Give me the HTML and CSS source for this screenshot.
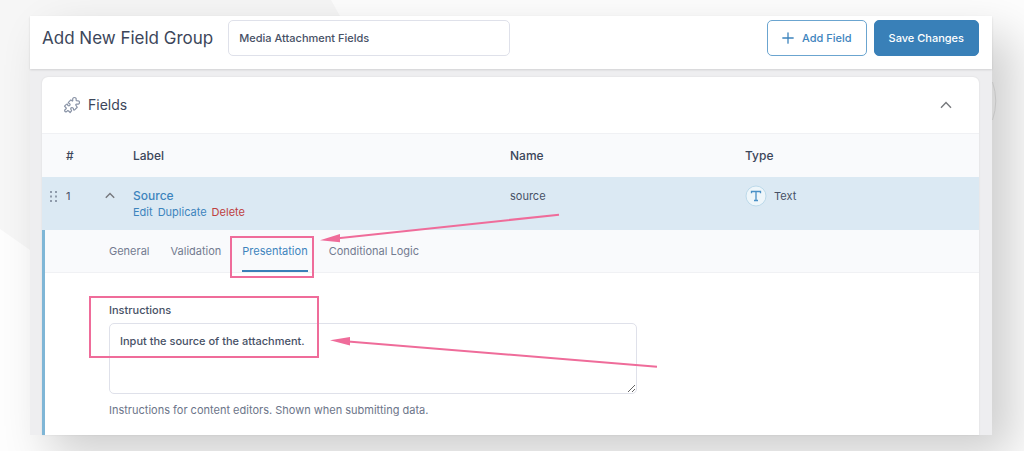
FILE: index.html
```html
<!DOCTYPE html>
<html lang="en">
<head>
<meta charset="utf-8">
<title>Add New Field Group</title>
<link rel="stylesheet" href="styles.css">
</head>
<body>
<svg class="backdrop" aria-hidden="true"><path d="M0 0H331L340 16V250H30L0 229Z" fill="#f6f6f6"/></svg>
<div class="window">
  <header class="topbar">
    <h1 class="title"><label for="group-name">Add New Field Group</label></h1>
    <input class="group-name" id="group-name" type="text" value="Media Attachment Fields">
    <div class="actions">
      <button class="btn btn-outline" type="button">
        <svg width="12" height="12" viewBox="0 0 12 12" fill="none" stroke="currentColor" stroke-width="1.3" stroke-linecap="round"><path d="M6 .8V11.2M.8 6H11.2"/></svg>
        Add Field
      </button>
      <button class="btn btn-primary" type="button">Save Changes</button>
    </div>
  </header>
  <main class="content">
    <section class="card">
      <div class="card-head">
        <svg class="puzzle" width="18" height="18" viewBox="0 0 24 24" fill="none" stroke="currentColor" stroke-width="1.6" stroke-linejoin="round"><path d="M13 5.500C12.500 3.500 13.500 2 15.200 2S18 3.500 17.500 5C17.300 6 18 6.700 19 6.500C20.500 6 22 7 22 8.700S20.500 11.300 18.500 10.800C17.300 10.600 16.700 11.500 17.300 12.500L19 15L15.500 18.500C14.700 19.200 14 18.600 14 17.800C14 16 12.800 15 11.500 15.500C10 16 10 17.500 11 18.500C11.600 19.200 11.500 19.800 11 20.300L9.500 22L7.500 20C6.800 19.300 6 19.500 5.500 20.200C4.500 21.500 3 21.300 2.400 20.200C1.800 19 2.500 18 3.700 17.500C4.600 17 4.600 16.300 4 15.700L2 13.500L4.500 11.200C5.200 10.600 6 10.800 6.200 11.700C6.500 13 8 13.500 9 12.500S9.300 10 8 9.700C7 9.500 6.900 8.700 7.500 8.200L10.500 5.200L12 6.500C12.700 7 13.200 6.500 13 5.500Z"/></svg>
        <h2 class="card-title">Fields</h2>
        <button class="icon-btn" type="button" aria-label="Collapse fields"><svg width="12" height="8" viewBox="0 0 12 8" fill="none" stroke="currentColor" stroke-width="1.4"><path d="M1 6.800 6 1.600 11 6.800"/></svg></button>
      </div>
      <table class="fields">
        <colgroup><col class="col-num"><col class="col-toggle"><col class="col-label"><col class="col-name"><col></colgroup>
        <thead><tr><th class="num">#</th><th></th><th>Label</th><th>Name</th><th>Type</th></tr></thead>
        <tbody>
          <tr class="row">
            <td><div class="handle"><svg width="7" height="11" viewBox="0 0 7 11" fill="#8f9bab"><path d="M0 0h2v2H0zM5 0h2v2H5zM0 4.500h2v2H0zM5 4.500h2v2H5zM0 9h2v2H0zM5 9h2v2H5z"/></svg>1</div></td>
            <td><button class="icon-btn small" type="button" aria-label="Collapse source"><svg width="10" height="7" viewBox="0 0 10 7" fill="none" stroke="currentColor" stroke-width="1.4"><path d="M.8 5.800 5 1.400 9.200 5.800"/></svg></button></td>
            <td><a class="field-link" href="#source">Source</a>
              <div class="row-actions"><a href="#edit">Edit</a><a href="#duplicate">Duplicate</a><a class="danger" href="#delete">Delete</a></div></td>
            <td>source</td>
            <td><div class="type"><svg width="22" height="22" viewBox="0 0 22 22" fill="none"><circle cx="11" cy="11" r="10" fill="#eef6fa" stroke="#bddaea"/><path d="M6.500 8.200V6.500h9v1.700M11 6.500v9M9 15.500h4" stroke="#4a90c6" stroke-width="1.300"/></svg>Text</div></td>
          </tr>
          <tr>
            <td class="editor" colspan="5">
              <nav class="tabs">
                <a class="tab" href="#general">General</a>
                <a class="tab" href="#validation">Validation</a>
                <a class="tab active" href="#presentation">Presentation</a>
                <a class="tab" href="#logic">Conditional Logic</a>
              </nav>
              <div class="panel">
                <label class="field-label" for="instructions">Instructions</label>
                <textarea class="instructions" id="instructions">Input the source of the attachment.</textarea>
                <p class="hint">Instructions for content editors. Shown when submitting data.</p>
              </div>
            </td>
          </tr>
        </tbody>
      </table>
    </section>
  </main>
</div>
<svg class="annotations" aria-hidden="true">
  <path d="M992.500 82Q999 101 992.500 120" fill="none" stroke="#c4c4c4"/>
  <g fill="none" stroke="#ef6c9a" stroke-width="2">
    <rect x="231" y="237" width="82" height="40"/>
    <rect x="90" y="297" width="228" height="60"/>
    <path d="M338 238.200 559 214.700M348 341.400 657 366.700"/>
  </g>
  <path d="M320 240.200 340 234V242.200ZM330 340.200 350 337V345.500Z" fill="#ef6c9a"/>
</svg>
</body>
</html>
```
FILE: styles.css
```css
* { box-sizing: border-box; }
body {
  margin: 0;
  padding: 16px 32px 16px 30px;
  background: #fdfdfd;
  color: #475166;
  font: 11px/16px Inter, "Liberation Sans", sans-serif;
  overflow: hidden;
}
button, input, textarea { font: inherit; color: inherit; }
a { color: #3d84bd; text-decoration: none; }
.backdrop, .annotations { position: absolute; inset: 0; width: 100%; height: 100%; pointer-events: none; }
.window { position: relative; background: #eeeef0; box-shadow: 20px 20px 44px rgba(0, 0, 0, .19); }
.topbar {
  display: flex;
  align-items: flex-start;
  gap: 15px;
  padding: 4px 13px 13px 12px;
  background: #fff;
  box-shadow: 0 1px 2px rgba(0, 0, 0, .12);
}
.title { margin: 0; font-size: 17px; line-height: 36px; font-weight: 400; color: #3c465a; }
.group-name {
  width: 282px;
  height: 36px;
  padding: 0 10px;
  border: 1px solid #dfe1ea;
  border-radius: 5px;
  background: #fff;
  font-weight: 500;
}
.actions { display: flex; gap: 7px; margin-left: auto; }
.btn {
  display: flex;
  align-items: center;
  gap: 8px;
  height: 36px;
  padding: 0 14px;
  border: 1px solid #3d84bd;
  border-radius: 5px;
  font-weight: 500;
  white-space: nowrap;
}
.btn-outline { background: #fff; border-color: #6ba5d0; color: #3d84bd; }
.btn-primary { background: #3980b8; border-color: #3980b8; color: #fff; }
.content { padding: 8px 13px 0 12px; }
.card { background: #fff; border-radius: 6px 6px 0 0; box-shadow: 0 0 2px rgba(0, 0, 0, .1); }
.card-head { display: flex; align-items: center; gap: 7px; height: 56px; padding: 0 27px 0 21px; }
.puzzle { color: #8993a6; }
.card-title { margin: 0; font-size: 14px; line-height: 20px; font-weight: 400; color: #3c465a; }
.icon-btn { display: flex; margin-left: auto; padding: 0; border: 0; background: none; color: #77797d; }
.icon-btn.small { margin: 4px 0 0; }
.fields { width: 100%; border-spacing: 0; table-layout: fixed; }
.col-num { width: 63px; }
.col-toggle { width: 28px; }
.col-label { width: 377px; }
.col-name { width: 235px; }
th {
  height: 44px;
  padding: 0;
  border-top: 1px solid #f0f1f4;
  background: #f9fafc;
  text-align: left;
  font-size: 12px;
  font-weight: 500;
  color: #3c465a;
}
th.num { padding-left: 24px; }
.row { background: #dbe9f3; }
.row td { height: 53px; padding: 11px 0 0; vertical-align: top; }
.handle { display: flex; align-items: center; gap: 9px; padding-left: 8px; }
.field-link { font-size: 12px; font-weight: 500; }
.row-actions { display: flex; gap: 5px; }
.row-actions .danger { color: #bf3f3f; }
.type { display: flex; align-items: center; gap: 7px; height: 16px; }
.editor { padding: 0; border-left: 3px solid #7fb6d6; }
.tabs { display: flex; gap: 21px; height: 43px; padding-left: 64px; background: #f9fafc; border-bottom: 1px solid #f0f1f4; }
.tab { height: 42px; padding-top: 13px; color: #737b90; }
.tab.active { color: #3d84bd; border-bottom: 2px solid #3980b8; }
.panel { display: flex; flex-direction: column; align-items: flex-start; padding: 29px 64px 17px; }
.field-label { font-weight: 500; }
.instructions {
  width: 528px;
  max-width: 100%;
  height: 71px;
  margin-top: 5px;
  padding: 9px 10px;
  border: 1px solid #dfe1ea;
  border-radius: 5px;
  background: #fff;
  font-weight: 500;
  resize: both;
}
.hint { margin: 8px 0 0; color: #6c7589; }
```
